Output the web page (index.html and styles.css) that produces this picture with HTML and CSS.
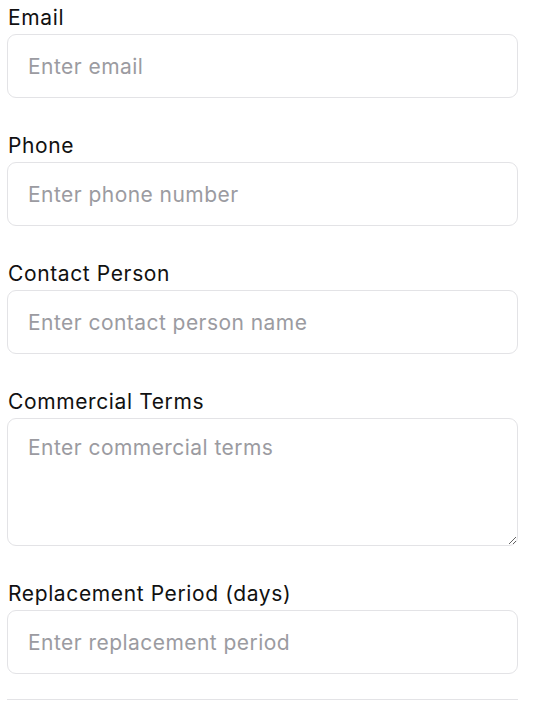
FILE: index.html
```html
<!DOCTYPE html>
<html>
<head>
<meta charset="utf-8">
<link rel="stylesheet" href="styles.css">
</head>
<body>
<form class="form">
  <div class="field">
    <label class="label">Email</label>
    <input class="input" type="text" placeholder="Enter email">
  </div>
  <div class="field">
    <label class="label">Phone</label>
    <input class="input" type="text" placeholder="Enter phone number">
  </div>
  <div class="field">
    <label class="label">Contact Person</label>
    <input class="input" type="text" placeholder="Enter contact person name">
  </div>
  <div class="field">
    <label class="label">Commercial Terms</label>
    <textarea class="input textarea" placeholder="Enter commercial terms"></textarea>
  </div>
  <div class="field">
    <label class="label">Replacement Period (days)</label>
    <input class="input" type="text" placeholder="Enter replacement period">
  </div>
  <hr class="divider">
</form>
</body>
</html>
```
FILE: styles.css
```css
html, body {
  margin: 0;
  padding: 0;
  background: #ffffff;
}
body {
  font-family: Inter, "Noto Sans", sans-serif;
}
.form {
  padding: 4px 0 0 7px;
  width: 511px;
  display: flex;
  flex-direction: column;
  gap: 34px;
}
.field {
  display: flex;
  flex-direction: column;
  gap: 2px;
}
.label {
  font-size: 21px;
  line-height: 28px;
  letter-spacing: 0.62px;
  color: #111111;
  padding-left: 1px;
  font-weight: 400;
}
.input {
  box-sizing: border-box;
  width: 511px;
  height: 64px;
  border: 1px solid #e3e3e6;
  border-radius: 9px;
  padding: 0 20px;
  font-family: Inter, "Noto Sans", sans-serif;
  font-size: 21px;
  letter-spacing: 0.45px;
  color: #111111;
  background: #ffffff;
  outline: none;
  margin: 0;
}
.input::placeholder {
  color: #9b9ba1;
}
.textarea {
  height: 128px;
  padding: 15px 20px;
  line-height: 28px;
  resize: vertical;
  display: block;
}
.divider {
  margin: -9px 0 0 0;
  border: none;
  border-top: 1px solid #e3e3e6;
  width: 511px;
}
```
